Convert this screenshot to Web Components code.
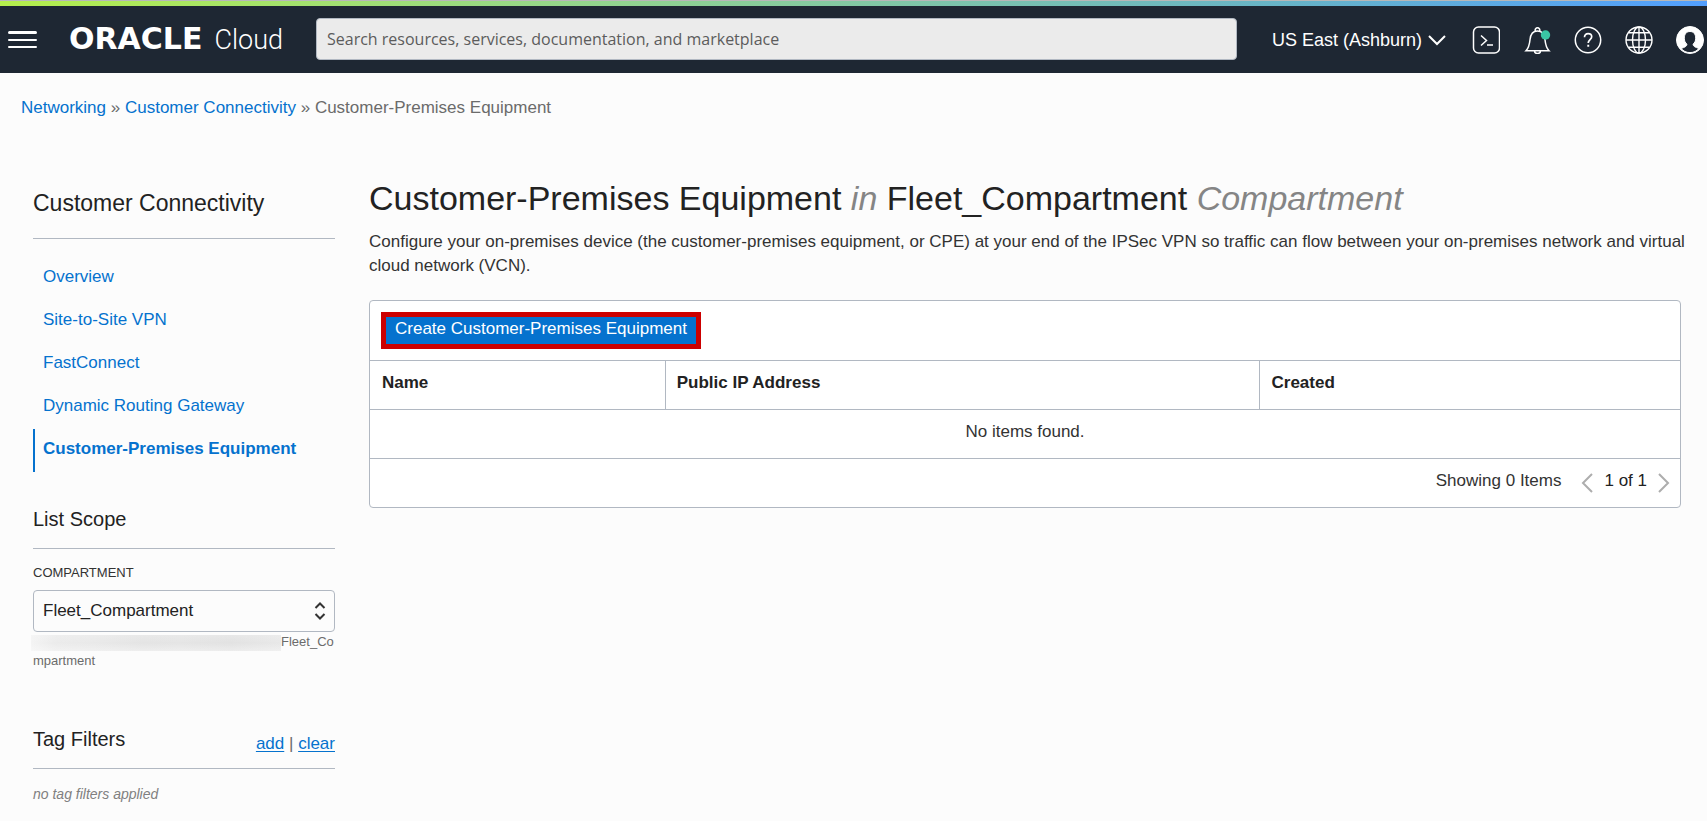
<!DOCTYPE html>
<html lang="en">
<head>
<meta charset="utf-8">
<title>Customer-Premises Equipment</title>
<style>
body{margin:0;background:#fcfcfc;color:#333;font:17px/24px "Liberation Sans",Arial,sans-serif;--link:#0572ce;--line:#b1b8c2;--ink:#222;--muted:#6b6b6b}
</style>
</head>
<body>
<console-page></console-page>

<template id="t-page">
<style>
:host{display:block}
.cols{display:grid;grid-template-columns:302px minmax(0,1fr);column-gap:34px;padding-left:33px}
</style>
<console-header></console-header>
<bread-crumbs></bread-crumbs>
<div class="cols">
  <side-panel></side-panel>
  <cpe-main></cpe-main>
</div>
</template>

<template id="t-header">
<style>
:host{display:block;border-top:1px solid #b8b8b8}
.stripe{height:5px;background:linear-gradient(90deg,#b5ef4c 0%,#94d68c 34%,#66b3c9 76%,#529fff 100%)}
header{display:flex;align-items:center;height:67px;background:#1e2733;color:#fff;padding:0 3px 0 7px;box-sizing:border-box}
button{background:none;border:0;padding:0;margin:0;color:inherit;font:inherit;display:flex;align-items:center;cursor:pointer}
svg{display:block;fill:none;stroke:currentColor}
.logo{display:flex;align-items:baseline;gap:12px;margin-left:32px;width:217px;color:#fff;text-decoration:none;white-space:nowrap}
.logo b{font:bold 30px/34px "DejaVu Sans",sans-serif}
.logo span{font:300 27px/34px Roboto,sans-serif}
form{flex:1;min-width:0;margin:0 35px 2px 30px;height:42px}
input{box-sizing:border-box;width:100%;height:42px;border:1px solid #b1b8c2;border-radius:4px;background:#ebebeb;padding:0 10px;font:16px/24px "Open Sans","Noto Sans",sans-serif;color:#555}
input::placeholder{color:#5c5c5c;opacity:1}
.region{font-size:18px;gap:6px;margin-right:26px;white-space:nowrap}
nav{display:flex;gap:23px}
</style>
<div class="stripe"></div>
<header>
  <button aria-label="Navigation menu"><svg width="30" height="20"><path d="M2.500 2.500h26" stroke-width="3" stroke-linecap="round"/><path d="M2 10h27M2 17h27" stroke-width="2" stroke-linecap="round"/></svg></button>
  <a class="logo" href="#"><b>ORACLE</b><span>Cloud</span></a>
  <form><input type="search" aria-label="Search" placeholder="Search resources, services, documentation, and marketplace"></form>
  <button class="region">US East (Ashburn)<svg width="18" height="12"><path d="M1 2l8 8 8-8" stroke-width="2"/></svg></button>
  <nav>
    <button aria-label="Developer tools"><svg width="28" height="28" stroke-width="1.500"><rect x="1.500" y="1" width="26" height="26" rx="5"/><path d="M9 9.500l5.500 5-5.500 5M15 19h6"/></svg></button>
    <button aria-label="Announcements"><svg width="28" height="28" stroke-width="1.500"><path d="M3 24.700c3-3 3.500-6 4-11 .5-5 2.500-8.700 7.500-8.700s7 3.700 7.500 8.700c.5 5 1 8 4 11zM12.300 4.800a2.300 2.300 0 1 1 4.400 0M11.500 25a3 2.500 0 0 0 6 0"/><circle cx="22.500" cy="9" r="4.700" fill="#3ac6a4" stroke="none"/></svg></button>
    <button aria-label="Help"><svg width="28" height="28" stroke-width="1.500"><circle cx="14" cy="14" r="12.700"/><path d="M10.500 11.200c0-2.300 1.500-3.600 3.600-3.600s3.600 1.300 3.600 3.200c0 2.700-3.500 2.900-3.500 6.100" stroke-width="1.700"/><path d="M13.300 18.700h1.900v2h-1.900z" fill="currentColor" stroke="none"/></svg></button>
    <button aria-label="Language"><svg width="28" height="28" stroke-width="1.400"><circle cx="14" cy="14" r="13"/><ellipse cx="14" cy="14" rx="6.500" ry="13"/><path d="M14 1v26M1 14h26M3.500 6.800h21M3.500 21.200h21"/></svg></button>
    <button aria-label="Profile"><svg width="28" height="28" stroke="none"><circle cx="14" cy="14" r="13.500" fill="#fff"/><path d="M14 5.500c3.700 0 5.700 2.900 5.700 6.700 0 2.600-1 4.800-2.700 6 0 2 2.200 3 5.800 4.300-2 2.600-5 4.100-8.800 4.100s-6.800-1.500-8.800-4.100c3.600-1.300 5.800-2.300 5.800-4.300-1.700-1.200-2.700-3.400-2.700-6 0-3.800 2-6.700 5.700-6.700z" fill="#1e2733"/></svg></button>
  </nav>
</header>
</template>

<template id="t-crumbs">
<style>
:host{display:block;padding:23px 21px 0}
nav{line-height:24px;color:var(--muted)}
a{color:var(--link);text-decoration:none}
</style>
<nav aria-label="Breadcrumb"><a href="#">Networking</a> » <a href="#">Customer Connectivity</a> » <span>Customer-Premises Equipment</span></nav>
</template>

<template id="t-link">
<style>
:host{display:block;height:43px;box-sizing:border-box;border-left:2px solid transparent;padding-left:8px}
:host([current]){border-color:var(--link);font-weight:bold}
a{display:block;line-height:39px;color:var(--link);text-decoration:none;white-space:nowrap}
</style>
<a href="#"><slot></slot></a>
</template>

<template id="t-side">
<style>
:host{display:block;padding-bottom:8px}
h2,h3{font-weight:normal;color:var(--ink);margin:0}
h2{font-size:23px;line-height:30px;margin-top:68px;padding-bottom:20px;border-bottom:1px solid var(--line)}
h3{font-size:20px;line-height:24px}
nav{margin-top:18px}
.scope{margin-top:35px;padding-bottom:17px;border-bottom:1px solid var(--line)}
label{display:block;font-size:13px;line-height:20px;margin:14px 0 7px}
.pick{display:grid;align-items:center}
.pick>*{grid-area:1/1}
select{appearance:none;width:100%;height:42px;border:1px solid var(--line);border-radius:4px;background:#fcfcfc;padding:0 32px 0 9px;font:inherit;color:var(--ink)}
.pick svg{justify-self:end;margin-right:9px;pointer-events:none;fill:none;stroke:#333;stroke-width:2}
.path{margin:0;font-size:13px;line-height:19px;color:var(--muted);word-break:break-all}
.hidden{display:inline-block;width:250px;height:16px;margin:3px 0 0 -2px;vertical-align:top;background:linear-gradient(180deg,#fcfcfc33,transparent 50%,#fcfcfc66),linear-gradient(90deg,#f4f4f4,#ebebeb 10%,#e9e9e9 25%,#e4e4e4 45%,#e5e5e5 60%,#e2e2e2 80%,#e8e8e8)}
.tags{display:flex;justify-content:space-between;height:29px;margin-top:57px;padding-bottom:12px;border-bottom:1px solid var(--line)}
.acts{align-self:flex-end;color:var(--muted)}
.acts a{color:var(--link);text-underline-offset:2px}
.none{font-size:14px;line-height:20px;font-style:italic;color:#808080;margin:15px 0 0}
</style>
<h2>Customer Connectivity</h2>
<nav>
  <side-link>Overview</side-link>
  <side-link>Site-to-Site VPN</side-link>
  <side-link>FastConnect</side-link>
  <side-link>Dynamic Routing Gateway</side-link>
  <side-link current>Customer-Premises Equipment</side-link>
</nav>
<h3 class="scope">List Scope</h3>
<label for="comp">COMPARTMENT</label>
<div class="pick"><select id="comp"><option>Fleet_Compartment</option></select><svg width="12" height="20"><path d="M1.500 7L6 2.500 10.500 7M1.500 13L6 17.500l4.500-4.500"/></svg></div>
<p class="path"><span class="hidden"></span>Fleet_Compartment</p>
<div class="tags"><h3>Tag Filters</h3><span class="acts"><a href="#">add</a> | <a href="#">clear</a></span></div>
<p class="none">no tag filters applied</p>
</template>

<template id="t-main">
<style>
:host{display:block}
h1{font-size:34px;line-height:40px;font-weight:normal;color:var(--ink);margin:58px 0 0}
h1 i{color:#858585}
p{margin:12px 12px 22px 0}
cpe-table{margin-right:26px}
</style>
<h1>Customer-Premises Equipment <i>in</i> Fleet_Compartment <i>Compartment</i></h1>
<p>Configure your on-premises device (the customer-premises equipment, or CPE) at your end of the IPSec VPN so traffic can flow between your on-premises network and virtual cloud network (VCN).</p>
<cpe-table></cpe-table>
</template>

<template id="t-table">
<style>
:host{display:block;background:#fff;border:1px solid var(--line);border-radius:4px}
.bar{padding:11px;height:37px;display:flex}
.create{box-sizing:border-box;height:37px;border:5px solid #c00;background:var(--link);color:#fff;font:inherit;line-height:24px;padding:0 9px 3px;cursor:pointer;white-space:nowrap}
table{width:100%;table-layout:fixed;border-collapse:separate;border-spacing:0}
th,td{height:44px;padding:0 12px 4px;border-top:1px solid var(--line);line-height:24px}
th{text-align:left;color:var(--ink)}
th+th{border-left:1px solid var(--line);padding-left:11px}
td{text-align:center}
.c1{width:22.500%}.c2{width:45.400%}
footer{display:flex;align-items:center;justify-content:flex-end;height:44px;padding:0 10px 4px;border-top:1px solid var(--line)}
.page{display:flex;align-items:center;gap:11px;margin-left:20px;color:var(--ink)}
.page button{border:0;background:none;padding:4px 0 0;display:block}
svg{display:block;fill:none;stroke:#adadad;stroke-width:2}
</style>
<div class="bar"><button class="create">Create Customer-Premises Equipment</button></div>
<table>
<colgroup><col class="c1"><col class="c2"><col></colgroup>
<thead><tr><th>Name</th><th>Public IP Address</th><th>Created</th></tr></thead>
<tbody><tr><td colspan="3">No items found.</td></tr></tbody>
</table>
<footer><span>Showing 0 Items</span><div class="page">
<button aria-label="Previous page" disabled><svg width="12" height="20"><path d="M11 1L2 10l9 9"/></svg></button><span>1 of 1</span><button aria-label="Next page" disabled><svg width="12" height="20"><path d="M1 1l9 9-9 9"/></svg></button></div></footer>
</template>

<script>
class ConsoleElement extends HTMLElement{
  constructor(){
    super();
    const t=document.getElementById(this.constructor.template);
    this.attachShadow({mode:"open"}).append(t.content.cloneNode(true));
  }
}
const define=(name,id)=>customElements.define(name,class extends ConsoleElement{static template=id});
define("console-header","t-header");
define("bread-crumbs","t-crumbs");
define("side-link","t-link");
define("side-panel","t-side");
define("cpe-table","t-table");
define("cpe-main","t-main");
define("console-page","t-page");
</script>
</body>
</html>
